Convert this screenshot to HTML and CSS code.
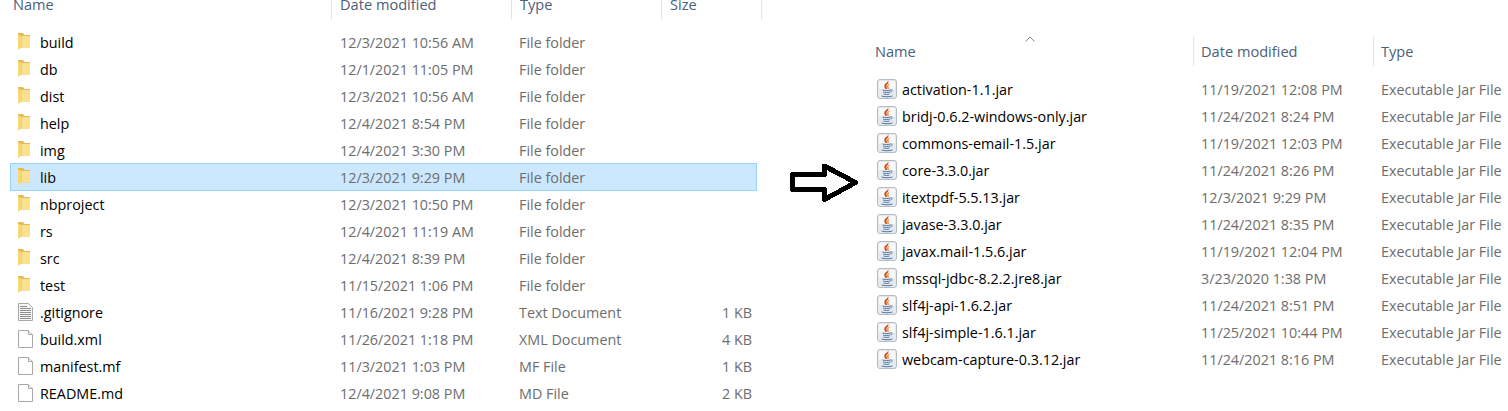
FILE: index.html
```html
<!DOCTYPE html>
<html lang="en">
<head>
    <meta charset="UTF-8">
    <title>Project folder and lib folder</title>
    <link rel="stylesheet" href="styles.css">
</head>
<body>
    <svg class="defs" width="0" height="0">
        <defs>
            <symbol id="folder" viewBox="0 0 15 18">
                <path d="M0 0h5l1.500 2H12v12.500H0z" fill="#e6b954"/>
                <path d="M3 3h9v11.500H3z" fill="#fbe08f"/>
                <path d="M0 1.500 3.500 3v11.500L0 17z" fill="#f7d877"/>
                <path d="M3.500 3v11.500" stroke="#eec55f" stroke-width=".6"/>
            </symbol>
            <symbol id="doc" viewBox="0 0 15 18">
                <path d="M.5.5h10l4 4v13H.500z" fill="#fff" stroke="#a8a8a8"/>
                <path d="M10.500.5v4h4" fill="#f0f0f0" stroke="#a8a8a8"/>
            </symbol>
            <symbol id="textdoc" viewBox="0 0 15 18">
                <path d="M.5.5h10l4 4v13H.500z" fill="#f6f6f6" stroke="#a8a8a8"/>
                <path d="M2 3.500h7M2 5.500h11M2 7.500h11M2 9.500h11M2 11.500h11M2 13.500h11M2 15.500h11" stroke="#8c8c8c"/>
            </symbol>
            <symbol id="jar" viewBox="0 0 20 20">
                <rect x=".5" y=".5" width="19" height="19" rx="2.500" fill="#e6eaee" stroke="#b4bcc4"/>
                <path d="M2 2h16v8H2z" fill="#f7f8fa"/>
                <path d="M11 1.500c1.500 2.500-1 3.500-1.500 5-.3 1 .3 2 .8 3.500H8.500C7 8 6.800 6.500 8 5c1-1.200 3-1.500 3-3.500z" fill="#d4500f"/>
                <path d="M13.500 4.500c-1.500.8-2.500 1.800-2 3.300.2.800.4 1.500.3 2.200h-1c-.5-1.500-1.300-3 0-4.300.7-.6 1.700-1 2.700-1.200z" fill="#e8802a"/>
                <path d="M5.500 11c2 .8 6 .8 8 0M6 13c2 .7 5 .7 7 0M6.500 15c2 .6 4 .6 6 0M4.500 17c3 1 8 1 11 0M13.500 11c2-.5 2.500 1.500 0 2" fill="none" stroke="#4f78a6"/>
            </symbol>
        </defs>
    </svg>

    <section class="pane pane-left">
        <div class="head">
            <div class="hcell">Name</div>
            <div class="hcell">Date modified</div>
            <div class="hcell">Type</div>
            <div class="hcell">Size</div>
        </div>
        <div class="list">
            <div class="row"><div class="name"><svg class="ico"><use href="#folder"/></svg>build</div><div class="cell">12/3/2021 10:56 AM</div><div class="cell">File folder</div><div class="size"></div></div>
            <div class="row"><div class="name"><svg class="ico"><use href="#folder"/></svg>db</div><div class="cell">12/1/2021 11:05 PM</div><div class="cell">File folder</div><div class="size"></div></div>
            <div class="row"><div class="name"><svg class="ico"><use href="#folder"/></svg>dist</div><div class="cell">12/3/2021 10:56 AM</div><div class="cell">File folder</div><div class="size"></div></div>
            <div class="row"><div class="name"><svg class="ico"><use href="#folder"/></svg>help</div><div class="cell">12/4/2021 8:54 PM</div><div class="cell">File folder</div><div class="size"></div></div>
            <div class="row"><div class="name"><svg class="ico"><use href="#folder"/></svg>img</div><div class="cell">12/4/2021 3:30 PM</div><div class="cell">File folder</div><div class="size"></div></div>
            <div class="row selected"><div class="name"><svg class="ico"><use href="#folder"/></svg>lib</div><div class="cell">12/3/2021 9:29 PM</div><div class="cell">File folder</div><div class="size"></div></div>
            <div class="row"><div class="name"><svg class="ico"><use href="#folder"/></svg>nbproject</div><div class="cell">12/3/2021 10:50 PM</div><div class="cell">File folder</div><div class="size"></div></div>
            <div class="row"><div class="name"><svg class="ico"><use href="#folder"/></svg>rs</div><div class="cell">12/4/2021 11:19 AM</div><div class="cell">File folder</div><div class="size"></div></div>
            <div class="row"><div class="name"><svg class="ico"><use href="#folder"/></svg>src</div><div class="cell">12/4/2021 8:39 PM</div><div class="cell">File folder</div><div class="size"></div></div>
            <div class="row"><div class="name"><svg class="ico"><use href="#folder"/></svg>test</div><div class="cell">11/15/2021 1:06 PM</div><div class="cell">File folder</div><div class="size"></div></div>
            <div class="row"><div class="name"><svg class="ico"><use href="#textdoc"/></svg>.gitignore</div><div class="cell">11/16/2021 9:28 PM</div><div class="cell">Text Document</div><div class="size">1 KB</div></div>
            <div class="row"><div class="name"><svg class="ico"><use href="#doc"/></svg>build.xml</div><div class="cell">11/26/2021 1:18 PM</div><div class="cell">XML Document</div><div class="size">4 KB</div></div>
            <div class="row"><div class="name"><svg class="ico"><use href="#doc"/></svg>manifest.mf</div><div class="cell">11/3/2021 1:03 PM</div><div class="cell">MF File</div><div class="size">1 KB</div></div>
            <div class="row"><div class="name"><svg class="ico"><use href="#doc"/></svg>README.md</div><div class="cell">12/4/2021 9:08 PM</div><div class="cell">MD File</div><div class="size">2 KB</div></div>
        </div>
    </section>

    <svg class="arrow" viewBox="0 0 70 40" width="70" height="40">
        <path d="M2.500 11.500H34.500V3L65.500 19.500 34.500 36.500V26.500H2.500z" fill="#fff" stroke="#000" stroke-width="5" stroke-linejoin="round"/>
    </svg>

    <section class="pane pane-right">
        <div class="head">
            <div class="hcell">Name</div>
            <div class="hcell">Date modified</div>
            <div class="hcell">Type</div>
            <svg class="caret" width="10" height="6" viewBox="0 0 10 6"><path d="M.5 5.500 5 1l4.500 4.500" fill="none" stroke="#8a8a8a"/></svg>
        </div>
        <div class="list">
            <div class="row"><div class="name"><svg class="ico"><use href="#jar"/></svg>activation-1.1.jar</div><div class="cell">11/19/2021 12:08 PM</div><div class="cell">Executable Jar File</div></div>
            <div class="row"><div class="name"><svg class="ico"><use href="#jar"/></svg>bridj-0.6.2-windows-only.jar</div><div class="cell">11/24/2021 8:24 PM</div><div class="cell">Executable Jar File</div></div>
            <div class="row"><div class="name"><svg class="ico"><use href="#jar"/></svg>commons-email-1.5.jar</div><div class="cell">11/19/2021 12:03 PM</div><div class="cell">Executable Jar File</div></div>
            <div class="row"><div class="name"><svg class="ico"><use href="#jar"/></svg>core-3.3.0.jar</div><div class="cell">11/24/2021 8:26 PM</div><div class="cell">Executable Jar File</div></div>
            <div class="row"><div class="name"><svg class="ico"><use href="#jar"/></svg>itextpdf-5.5.13.jar</div><div class="cell">12/3/2021 9:29 PM</div><div class="cell">Executable Jar File</div></div>
            <div class="row"><div class="name"><svg class="ico"><use href="#jar"/></svg>javase-3.3.0.jar</div><div class="cell">11/24/2021 8:35 PM</div><div class="cell">Executable Jar File</div></div>
            <div class="row"><div class="name"><svg class="ico"><use href="#jar"/></svg>javax.mail-1.5.6.jar</div><div class="cell">11/19/2021 12:04 PM</div><div class="cell">Executable Jar File</div></div>
            <div class="row"><div class="name"><svg class="ico"><use href="#jar"/></svg>mssql-jdbc-8.2.2.jre8.jar</div><div class="cell">3/23/2020 1:38 PM</div><div class="cell">Executable Jar File</div></div>
            <div class="row"><div class="name"><svg class="ico"><use href="#jar"/></svg>slf4j-api-1.6.2.jar</div><div class="cell">11/24/2021 8:51 PM</div><div class="cell">Executable Jar File</div></div>
            <div class="row"><div class="name"><svg class="ico"><use href="#jar"/></svg>slf4j-simple-1.6.1.jar</div><div class="cell">11/25/2021 10:44 PM</div><div class="cell">Executable Jar File</div></div>
            <div class="row"><div class="name"><svg class="ico"><use href="#jar"/></svg>webcam-capture-0.3.12.jar</div><div class="cell">11/24/2021 8:16 PM</div><div class="cell">Executable Jar File</div></div>
        </div>
    </section>
</body>
</html>
```

FILE: styles.css
```css
html, body {
    height: 100%;
    overflow: hidden;
}

body {
    margin: 0;
    background: #fff;
    display: flex;
    align-items: flex-start;
    font-family: "Open Sans", "Noto Sans", sans-serif;
    font-size: 14.35px;
    color: #000;
}

.defs {
    position: absolute;
}

.pane {
    flex: none;
}

.pane-left {
    width: 752px;
    margin-left: 10px;
    --cols: 321px 179px 150px 95px;
}

.pane-left .row {
    width: 747px;
}

.pane-right {
    width: 641px;
    margin-top: 36px;
    --cols: 325px 180px 134px;
    position: relative;
}

.head {
    display: flex;
    height: 20px;
    align-items: flex-end;
    color: #4c607a;
    font-size: 14.6px;
}

.pane-right .head {
    height: 30px;
}

.hcell {
    box-sizing: border-box;
    flex: none;
    height: 100%;
    padding: 0 0 7px 8px;
    border-right: 1px solid #e5e5e5;
    display: flex;
    align-items: flex-end;
    line-height: 18px;
}

.pane-left .hcell:nth-child(1) { width: 322px; padding-left: 3px; }
.pane-left .hcell:nth-child(2) { width: 180px; }
.pane-left .hcell:nth-child(3) { width: 150px; }
.pane-left .hcell:nth-child(4) { width: 100px; }

.pane-right .hcell { padding: 0 0 6px 7px; }
.pane-right .hcell:nth-child(1) { width: 327px; padding-left: 8px; }
.pane-right .hcell:nth-child(2) { width: 180px; }
.pane-right .hcell:nth-child(3) { width: 130px; border-right: 0; }

.caret {
    position: absolute;
    left: 158px;
    top: 0;
}

.list {
    padding-top: 8px;
}

.pane-right .list {
    padding-top: 9px;
}

.row {
    box-sizing: border-box;
    display: grid;
    grid-template-columns: var(--cols);
    height: 28px;
    margin-bottom: -1px;
    border: 1px solid transparent;
    align-items: center;
    color: #6d6d6d;
    white-space: nowrap;
}

.row.selected {
    background: #cce8ff;
    border-color: #99d1ff;
}

.name {
    display: flex;
    align-items: center;
    color: #000;
}

.ico {
    flex: none;
}

.pane-left .name {
    padding-left: 7px;
}

.pane-left .ico {
    width: 15px;
    height: 18px;
    margin-right: 7px;
}

.pane-right .name {
    padding-left: 9px;
}

.pane-right .ico {
    width: 20px;
    height: 20px;
    margin-right: 5px;
}

.cell {
    padding-left: 8px;
}

.size {
    text-align: right;
    padding-right: 4px;
}

.arrow {
    flex: none;
    margin: 163px 7px 0 28px;
    shape-rendering: crispEdges;
}
```
